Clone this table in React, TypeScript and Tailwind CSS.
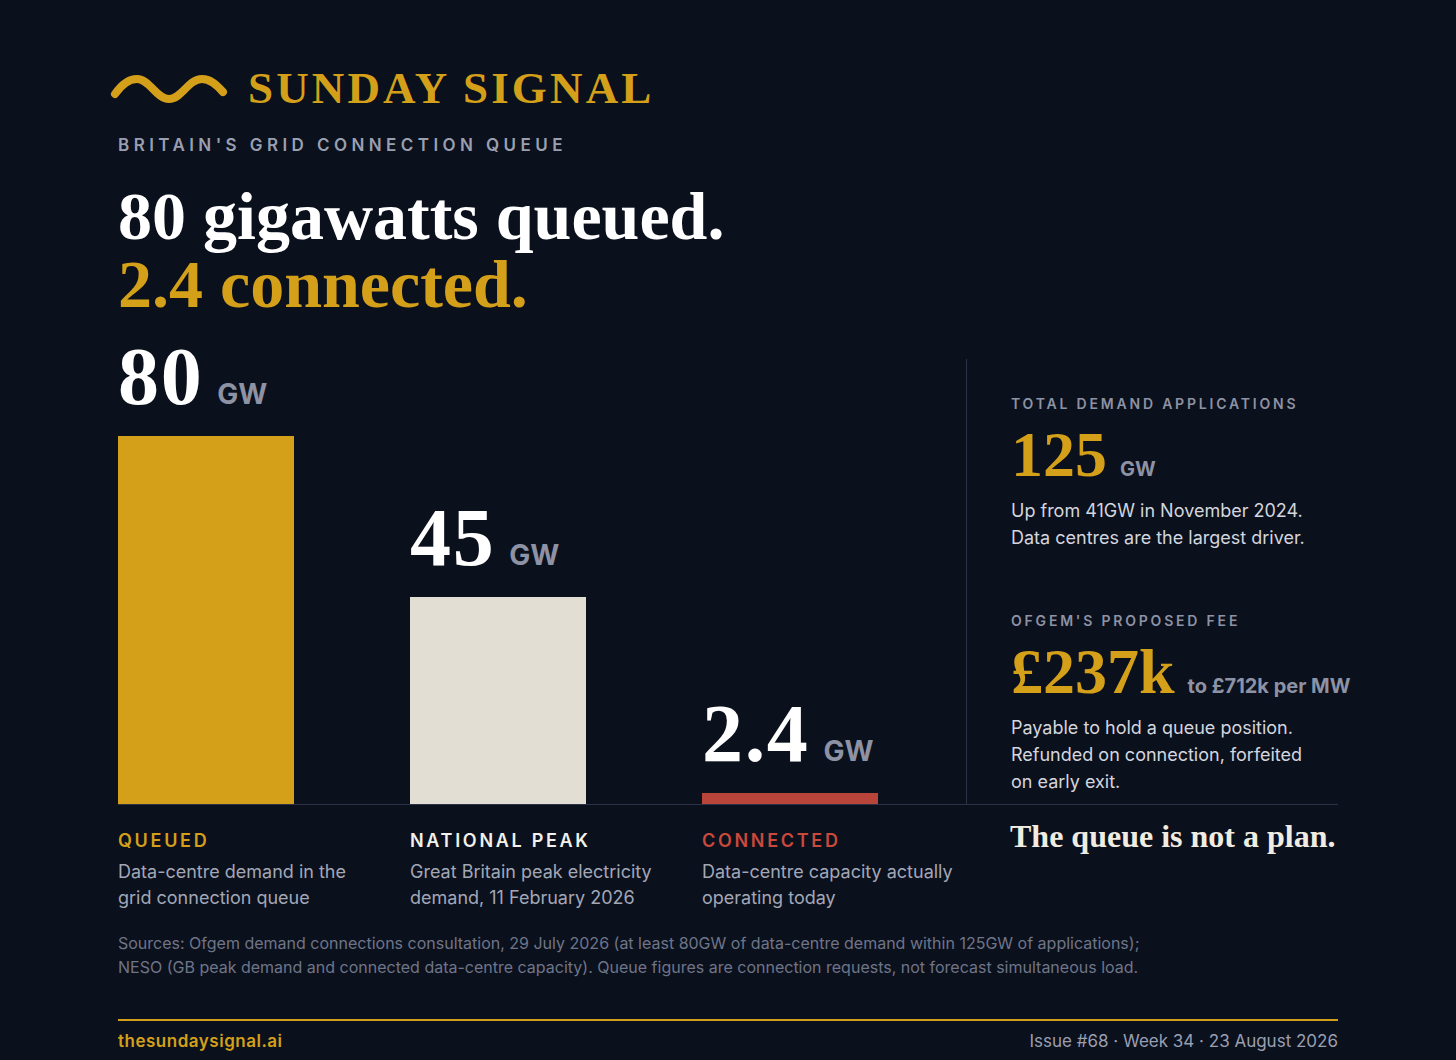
const serif = "font-['Liberation_Serif','Times_New_Roman',serif]";

interface Column {
  value: string;
  gw: number;
  barColor: string;
  label: string;
  labelColor: string;
  lines: string[];
  width: string;
}

const PX_PER_GW = 4.6;

const columns: Column[] = [
  {
    value: '80',
    gw: 80,
    barColor: 'bg-[#d4a01a]',
    label: 'QUEUED',
    labelColor: 'text-[#d4a01a]',
    lines: ['Data-centre demand in the', 'grid connection queue'],
    width: 'w-[292px]',
  },
  {
    value: '45',
    gw: 45,
    barColor: 'bg-[#e3ded3]',
    label: 'NATIONAL PEAK',
    labelColor: 'text-[#f3f1ec]',
    lines: ['Great Britain peak electricity', 'demand, 11 February 2026'],
    width: 'w-[292px]',
  },
  {
    value: '2.4',
    gw: 2.4,
    barColor: 'bg-[#b9453a]',
    label: 'CONNECTED',
    labelColor: 'text-[#c9493c]',
    lines: ['Data-centre capacity actually', 'operating today'],
    width: 'flex-1',
  },
];

function Wave() {
  return (
    <svg width="118" height="34" viewBox="0 0 118 34" fill="none">
      <path
        d="M5 22 C 12 12, 19 7, 27 7 C 40 7, 46 27, 59 27 C 72 27, 78 7, 92 7 C 100 7, 106 12, 113 20"
        stroke="#d4a01a"
        strokeWidth="8"
        strokeLinecap="round"
      />
    </svg>
  );
}

function Stat({ label, value, unit, lines }: { label: string; value: string; unit: string; lines: string[] }) {
  return (
    <div>
      <div className="text-[14px] leading-[20px] font-semibold tracking-[0.2em] text-[#8d92a4]">{label}</div>
      <div className="mt-[9px] flex items-baseline gap-[13px] whitespace-nowrap">
        <span className={`${serif} text-[64px] leading-none font-bold text-[#d4a01a]`}>{value}</span>
        <span className="text-[20px] font-bold text-[#8d92a4]">{unit}</span>
      </div>
      <div className="mt-[10px] text-[18px] leading-[27px] text-[#d3d6de]">
        {lines.map((l, i) => (
          <div key={i}>{l}</div>
        ))}
      </div>
    </div>
  );
}

export default function App() {
  return (
    <div className="min-h-screen bg-[#0b101d] font-['Inter','Noto_Sans',sans-serif] text-white">
      <div className="w-[1456px] h-[1060px] px-[118px] pt-[66px]">
        {/* masthead */}
        <div className="flex items-center gap-[20px] -ml-[8px] h-[45px]">
          <Wave />
          <span className={`${serif} text-[45px] leading-none font-bold tracking-[0.07em] text-[#d4a01a]`}>
            SUNDAY SIGNAL
          </span>
        </div>
        <div className="mt-[24px] text-[17px] leading-[20px] font-semibold tracking-[0.26em] text-[#9a9fb0]">
          BRITAIN'S GRID CONNECTION QUEUE
        </div>

        <h1 className={`${serif} mt-[27px] text-[68px] leading-[68px] font-bold`}>
          <div className="text-white">80 gigawatts queued.</div>
          <div className="text-[#d4a01a]">2.4 connected.</div>
        </h1>

        {/* chart + side panel */}
        <div className="mt-[41px] flex h-[446px] border-b border-[#2a3245]">
          <div className="w-[848px] shrink-0 flex items-end">
            {columns.map((c) => (
              <div key={c.label} className={`${c.width} flex flex-col justify-end`}>
                <div className="mb-[18px] flex items-baseline gap-[14px]">
                  <span className={`${serif} text-[82px] leading-none font-bold tracking-[0.02em] text-white`}>{c.value}</span>
                  <span className="text-[28px] font-bold text-[#8d92a4]">GW</span>
                </div>
                <div className={`w-[176px] ${c.barColor}`} style={{ height: Math.round(c.gw * PX_PER_GW) }} />
              </div>
            ))}
          </div>
          <div className="flex-1 min-w-0 border-l border-[#2a3245] pl-[44px] pt-[35px]">
            <Stat
              label="TOTAL DEMAND APPLICATIONS"
              value="125"
              unit="GW"
              lines={['Up from 41GW in November 2024.', 'Data centres are the largest driver.']}
            />
            <div className="mt-[60px]">
              <Stat
                label="OFGEM'S PROPOSED FEE"
                value="£237k"
                unit="to £712k per MW"
                lines={['Payable to hold a queue position.', 'Refunded on connection, forfeited', 'on early exit.']}
              />
            </div>
          </div>
        </div>

        {/* captions */}
        <div className="flex">
          <div className="w-[848px] shrink-0 flex pt-[24px]">
            {columns.map((c) => (
              <div key={c.label} className={c.width}>
                <div className={`text-[18px] leading-[24px] font-semibold tracking-[0.15em] ${c.labelColor}`}>{c.label}</div>
                <div className="mt-[6px] text-[18px] leading-[26px] text-[#a2a7b6]">
                  {c.lines.map((l, i) => (
                    <div key={i}>{l}</div>
                  ))}
                </div>
              </div>
            ))}
          </div>
          <div className="flex-1 min-w-0 pl-[44px] pt-[15px]">
            <div className={`${serif} text-[32px] leading-none font-bold whitespace-nowrap text-[#f1ece1]`}>The queue is not a plan.</div>
          </div>
        </div>

        <p className="mt-[20px] text-[16px] leading-[24px] text-[#6f7588]">
          Sources: Ofgem demand connections consultation, 29 July 2026 (at least 80GW of data-centre demand within 125GW of applications);
          <br />
          NESO (GB peak demand and connected data-centre capacity). Queue figures are connection requests, not forecast simultaneous load.
        </p>

        <footer className="mt-[40px] border-t-2 border-[#d4a01a] pt-[8px] flex justify-between text-[17px] leading-[24px]">
          <span className="font-semibold tracking-[0.03em] text-[#d4a01a]">thesundaysignal.ai</span>
          <span className="text-[#9a9fb0]">Issue #68 · Week 34 · 23 August 2026</span>
        </footer>
      </div>
    </div>
  );
}
